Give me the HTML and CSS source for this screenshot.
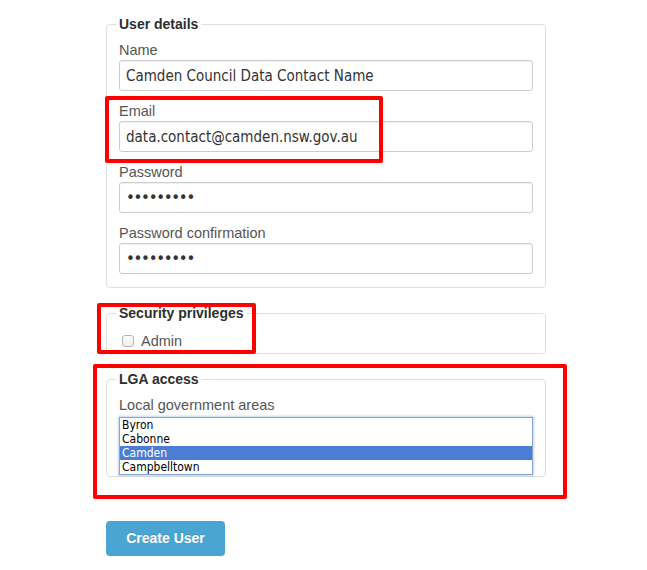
FILE: index.html
```html
<!DOCTYPE html>
<html lang="en">
<head>
<meta charset="utf-8">
<title>New user</title>
<link rel="stylesheet" href="styles.css">
</head>
<body>
<div class="page">
  <form class="user-form">
    <fieldset class="group group-details">
      <legend>User details</legend>
      <div class="field">
        <label for="name">Name</label>
        <input id="name" class="text-input" type="text" value="Camden Council Data Contact Name">
      </div>
      <div class="field">
        <label for="email">Email</label>
        <input id="email" class="text-input" type="text" value="data.contact@camden.nsw.gov.au">
      </div>
      <div class="field">
        <label for="password">Password</label>
        <input id="password" class="text-input pw" type="password" value="123456789">
      </div>
      <div class="field">
        <label for="password2">Password confirmation</label>
        <input id="password2" class="text-input pw" type="password" value="123456789">
      </div>
    </fieldset>

    <fieldset class="group group-security">
      <legend>Security privileges</legend>
      <label class="check-row"><input type="checkbox" class="check"><span>Admin</span></label>
    </fieldset>

    <fieldset class="group group-lga">
      <legend>LGA access</legend>
      <label class="lga-label">Local government areas</label>
      <div class="listbox" role="listbox">
        <div class="opt">Byron</div>
        <div class="opt">Cabonne</div>
        <div class="opt selected">Camden</div>
        <div class="opt">Campbelltown</div>
      </div>
    </fieldset>

    <button type="button" class="btn-create">Create User</button>
  </form>
</div>

<div class="mark mark-email"></div>
<div class="mark mark-security"></div>
<div class="mark mark-lga"></div>
</body>
</html>
```

FILE: styles.css
```css
html, body {
  margin: 0;
  padding: 0;
  background: #fff;
}

body {
  font-family: "Liberation Sans", Arial, sans-serif;
  color: #333;
}

.page {
  padding: 14px 0 0 106px;
}

.user-form {
  width: 440px;
}

.group {
  margin: 0 0 15px;
  border: 1px solid #dedede;
  border-radius: 4px;
  padding: 6px 11px 3px 12px;
  min-width: 0;
}

.group legend {
  font: bold 14px/20px "Liberation Sans", Arial, sans-serif;
  color: #2e2e2e;
  padding: 0 3px;
  margin-left: -3px;
}

.group-security {
  padding-top: 8px;
  padding-bottom: 2px;
}

.group-lga {
  padding-top: 6px;
  padding-bottom: 1px;
}

.field {
  margin-bottom: 10px;
}

.field label,
.lga-label {
  display: block;
  height: 20px;
  font-size: 14.5px;
  line-height: 20px;
  color: #555;
}

.text-input {
  display: block;
  box-sizing: border-box;
  width: 414px;
  height: 31px;
  margin: 0;
  padding: 1px 6px 0;
  border: 1px solid #cdcdcd;
  border-radius: 3px;
  box-shadow: inset 0 1px 1px rgba(0, 0, 0, 0.06);
  font-family: "DejaVu Sans Condensed", "DejaVu Sans", sans-serif;
  font-stretch: condensed;
  font-size: 15px;
  color: #333;
  background: #fff;
  outline: none;
}

.text-input.pw {
  font-family: "DejaVu Sans", sans-serif;
  font-stretch: normal;
  font-size: 15px;
  letter-spacing: -1.3px;
  color: #333;
}

.check-row {
  display: flex;
  align-items: center;
  height: 20px;
  font-size: 14.5px;
  color: #555;
}

.check {
  -webkit-appearance: none;
  appearance: none;
  box-sizing: border-box;
  width: 12px;
  height: 12px;
  margin: 0 7px 0 3px;
  border: 1px solid #b3b3b3;
  border-radius: 3px;
  background: linear-gradient(#ffffff, #ececec);
}

.listbox {
  box-sizing: border-box;
  width: 414px;
  height: 58px;
  margin-top: 2px;
  border: 1px solid #86a6cf;
  box-shadow: 0 0 2px 1px rgba(110, 160, 225, 0.45);
  background: #fff;
  overflow: hidden;
  font-family: "DejaVu Sans Condensed", "DejaVu Sans", sans-serif;
  font-stretch: condensed;
  font-size: 12px;
  color: #000;
}

.opt {
  height: 14px;
  line-height: 14px;
  padding-left: 2px;
  white-space: nowrap;
}

.opt.selected {
  background: #4a7dd3;
  color: #fff;
}

.btn-create {
  display: block;
  box-sizing: border-box;
  width: 119px;
  height: 35px;
  margin: 44px 0 0;
  padding: 0;
  border: none;
  border-radius: 4px;
  background: #4ba5d2;
  color: #fff;
  font: bold 14px/35px "Liberation Sans", Arial, sans-serif;
  text-align: center;
  text-shadow: 0 -1px 0 rgba(0, 0, 0, 0.12);
}

.mark {
  position: absolute;
  box-sizing: border-box;
  border: 4px solid #ff0000;
  border-radius: 2px;
  pointer-events: none;
}

.mark-email {
  left: 105px;
  top: 96px;
  width: 278px;
  height: 67px;
}

.mark-security {
  left: 97px;
  top: 303px;
  width: 159px;
  height: 51px;
}

.mark-lga {
  left: 93px;
  top: 364px;
  width: 474px;
  height: 135px;
}
```
